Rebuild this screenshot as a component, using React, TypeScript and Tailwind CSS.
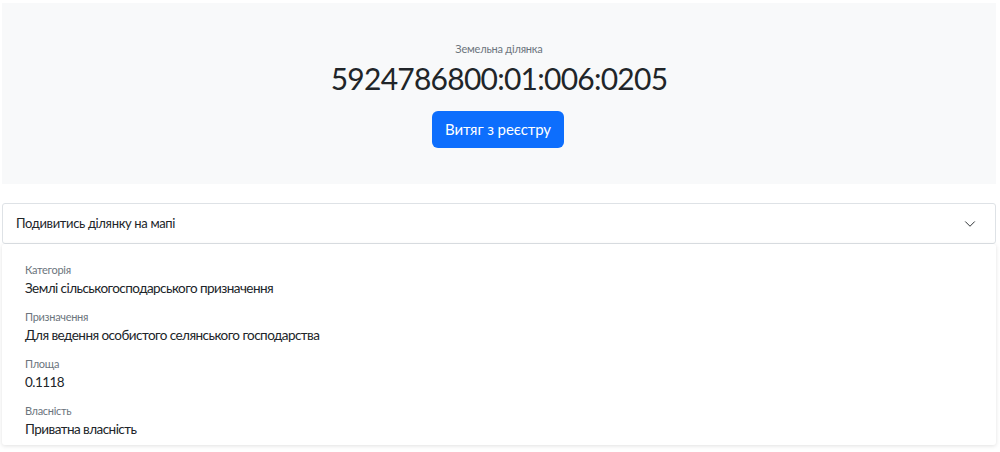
import { ChevronDown } from 'lucide-react';

const fields = [
  { label: 'Категорія', value: 'Землі сільськогосподарського призначення' },
  { label: 'Призначення', value: 'Для ведення особистого селянського господарства' },
  { label: 'Площа', value: '0.1118' },
  { label: 'Власність', value: 'Приватна власність' },
];

export default function App() {
  return (
    <div
      className="min-h-screen bg-white pt-[3px] pl-[2px] pr-[4px] text-[#212529]"
      style={{ fontFamily: 'Lato, "Noto Sans", sans-serif' }}
    >
      <section className="flex h-[181px] flex-col items-center bg-[#f8f9fa] pt-[38px]">
        <p className="text-[11px] leading-[16px] tracking-[-0.2px] text-[#6c757d]">Земельна ділянка</p>
        <h2 className="mt-[1px] text-[30px] leading-[40px] font-normal tracking-[-0.75px]">5924786800:01:006:0205</h2>
        <button className="mt-[13px] ml-[-2px] h-[37px] rounded-[6px] bg-[#0d6efd] px-[13px] text-[15px] tracking-[-0.1px] text-white">
          Витяг з реєстру
        </button>
      </section>

      <div className="mt-[19px] flex h-[41px] items-center justify-between rounded-[3px] border border-[#dee2e6] px-[13px]">
        <span className="text-[13px] tracking-[-0.35px]">Подивитись ділянку на мапі</span>
        <ChevronDown className="mr-[3px] h-[18px] w-[18px] text-[#212529]" strokeWidth={1.25} />
      </div>

      <div className="flex flex-col gap-[11px] rounded-[3px] px-[23px] pt-[17px] pb-[7px] shadow-[0_1px_4px_rgba(0,0,0,0.12)]">
        {fields.map((f) => (
          <div key={f.label} className="flex flex-col">
            <span className="text-[11px] leading-[18px] tracking-[-0.3px] text-[#6c757d]">{f.label}</span>
            <span className="text-[13.5px] leading-[18px] tracking-[-0.55px]">{f.value}</span>
          </div>
        ))}
      </div>
    </div>
  );
}
